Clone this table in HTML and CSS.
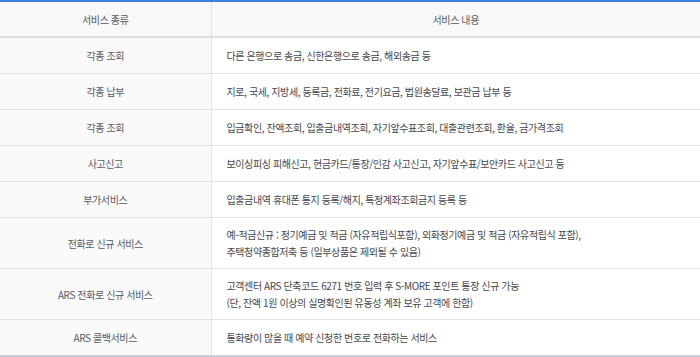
FILE: index.html
```html
<!DOCTYPE html>
<html lang="ko">
<head>
<meta charset="utf-8">
<link rel="stylesheet" href="styles.css">
</head>
<body>
<table class="svc">
  <colgroup><col class="c1"><col class="c2"></colgroup>
  <thead>
    <tr><th>서비스 종류</th><th>서비스 내용</th></tr>
  </thead>
  <tbody>
    <tr><th>각종 조회</th><td>다른 은행으로 송금, 신한은행으로 송금, 해외송금 등</td></tr>
    <tr><th>각종 납부</th><td>지로, 국세, 지방세, 등록금, 전화료, 전기요금, 법원송달료, 보관금 납부 등</td></tr>
    <tr><th>각종 조회</th><td>입금확인, 잔액조회, 입출금내역조회, 자기앞수표조회, 대출관련조회, 환율, 금가격조회</td></tr>
    <tr><th>사고신고</th><td>보이싱피싱 피해신고, 현금카드/통장/인감 사고신고, 자기앞수표/보안카드 사고신고 등</td></tr>
    <tr><th>부가서비스</th><td>입출금내역 휴대폰 통지 등록/해지, 특정계좌조회금지 등록 등</td></tr>
    <tr class="two"><th>전화로 신규 서비스</th><td>예-적금신규 : 정기예금 및 적금 (자유적립식포함), 외화정기예금 및 적금 (자유적립식 포함),<br>주택청약종합저축 등 (일부상품은 제외될 수 있음)</td></tr>
    <tr class="two"><th>ARS 전화로 신규 서비스</th><td>고객센터 ARS 단축코드 6271 번호 입력 후 S-MORE 포인트 통장 신규 가능<br>(단, 잔액 1원 이상의 실명확인된 유동성 계좌 보유 고객에 한함)</td></tr>
    <tr><th>ARS 콜백서비스</th><td>통화량이 많을 때 예약 신청한 번호로 전화하는 서비스</td></tr>
  </tbody>
</table>
</body>
</html>
```
FILE: styles.css
```css
html, body {
  margin: 0;
  padding: 0;
  background: #fff;
}
body {
  font-family: "Noto Sans CJK KR", "Noto Sans", sans-serif;
  font-size: 10px;
  color: #454650;
  letter-spacing: -0.4px;
}
.svc {
  width: 700px;
  border-collapse: collapse;
  table-layout: fixed;
  border-top: 2px solid #3b7fe0;
  border-bottom: 2px solid #c8cde0;
}
.c1 { width: 211px; }
.svc th, .svc td {
  border-bottom: 1px solid #e2e2e2;
  height: 35px;
  padding: 0;
  line-height: 17px;
  font-weight: 400;
  vertical-align: middle;
}
.svc th {
  text-align: center;
  border-right: 1px solid #e2e2e2;
  background: #fafafa;
  color: #555966;
}
.svc thead th {
  background: #f8f8f8;
  height: 34px;
  border-bottom: 2px solid #dedede;
}
.svc thead th + th { border-right: 0; }
.svc td {
  padding-left: 15px;
  text-align: left;
}
.svc .two th, .svc .two td { height: 50px; }
```
